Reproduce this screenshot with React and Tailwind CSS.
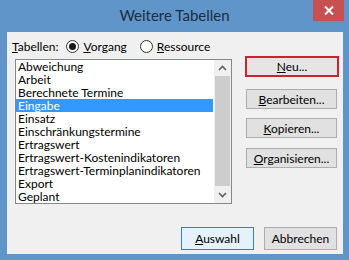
import React from "react";

const items = [
  "Abweichung",
  "Arbeit",
  "Berechnete Termine",
  "Eingabe",
  "Einsatz",
  "Einschränkungstermine",
  "Ertragswert",
  "Ertragswert-Kostenindikatoren",
  "Ertragswert-Terminplanindikatoren",
  "Export",
  "Geplant",
];

function Radio({ checked }) {
  return (
    <span className="w-[13px] h-[13px] rounded-full border border-[#333] bg-white flex items-center justify-center">
      {checked && <span className="w-[7px] h-[7px] rounded-full bg-[#1a1a1a]" />}
    </span>
  );
}

function Btn({ children, className = "" }) {
  return (
    <div
      className={
        "h-[20px] w-[91px] border border-[#adadad] bg-[#e1e1e1] flex items-center justify-center text-black " +
        className
      }
    >
      {children}
    </div>
  );
}

export default function App() {
  return (
    <div
      className="w-[349px] h-[260px] bg-[#5f95c9] flex flex-col overflow-hidden"
      style={{ fontFamily: 'Lato, "Noto Sans", sans-serif' }}
    >
      {/* Title bar */}
      <div className="relative h-[32px] flex items-center justify-center">
        <span className="text-[15px] text-[#1c2e40] mt-[-2px]">Weitere Tabellen</span>
        <div className="absolute right-[5px] top-0 w-[31px] h-[21px] bg-[#c75050] flex items-center justify-center">
          <svg width="10" height="9" viewBox="0 0 10 9">
            <path d="M1 0.5 L9 8.5 M9 0.5 L1 8.5" stroke="white" strokeWidth="2" />
          </svg>
        </div>
      </div>

      {/* Client area */}
      <div className="flex-1 ml-[7px] mr-[6px] mb-[6px] bg-[#f0f0f0] flex flex-col text-[12px] text-black leading-[13px]">
        <div className="flex items-center h-[16px] mt-[6px] pl-[5px]">
          <span>
            <span className="underline">T</span>abellen:
          </span>
          <span className="ml-[8px] flex items-center gap-[4px]">
            <Radio checked />
            <span>
              <span className="underline">V</span>organg
            </span>
          </span>
          <span className="ml-[13px] flex items-center gap-[4px]">
            <Radio />
            <span>
              <span className="underline">R</span>essource
            </span>
          </span>
        </div>

        <div className="flex mt-[2px]">
          {/* List box */}
          <div className="ml-[8px] mt-[3px] w-[217px] h-[145px] border border-[#828790] bg-white flex">
            <div className="flex-1 flex flex-col">
              {items.map((it) => (
                <div
                  key={it}
                  className={
                    "h-[13px] pl-[2px] flex items-center whitespace-nowrap " +
                    (it === "Eingabe" ? "bg-[#3399ff] text-white" : "")
                  }
                >
                  {it}
                </div>
              ))}
            </div>
            <div className="w-[17px] ml-[1px] bg-[#f0f0f0] flex flex-col items-center">
              <div className="h-[16px] flex items-center justify-center">
                <svg width="9" height="6" viewBox="0 0 9 6">
                  <path d="M1 5 L4.5 1.5 L8 5" stroke="#606060" strokeWidth="1.6" fill="none" />
                </svg>
              </div>
              <div className="w-[15px] h-[110px] bg-[#cdcdcd]" />
              <div className="flex-1" />
              <div className="h-[16px] flex items-center justify-center">
                <svg width="9" height="6" viewBox="0 0 9 6">
                  <path d="M1 1 L4.5 4.5 L8 1" stroke="#606060" strokeWidth="1.6" fill="none" />
                </svg>
              </div>
            </div>
          </div>

          {/* Side buttons */}
          <div className="ml-[13px] flex flex-col">
            <div className="w-[94px] h-[21px] border-2 border-[#d0222c] bg-[#e5e5e5] flex items-center justify-center">
              <span>
                <span className="underline">N</span>eu...
              </span>
            </div>
            <Btn className="mt-[12px] ml-[1px]">
              <span>
                <span className="underline">B</span>earbeiten...
              </span>
            </Btn>
            <Btn className="mt-[9px] ml-[1px]">
              <span>
                <span className="underline">K</span>opieren...
              </span>
            </Btn>
            <Btn className="mt-[10px] ml-[1px]">
              <span>
                <span className="underline">O</span>rganisieren...
              </span>
            </Btn>
          </div>
        </div>

        {/* Bottom buttons */}
        <div className="flex mt-[23px] pl-[174px]">
          <div className="w-[73px] h-[23px] border border-[#3c7fb1] bg-[#e5f1fb] flex items-center justify-center">
            <span>
              <span className="underline">A</span>uswahl
            </span>
          </div>
          <div className="ml-[10px] w-[73px] h-[23px] border border-[#adadad] bg-[#e1e1e1] flex items-center justify-center">
            Abbrechen
          </div>
        </div>
      </div>
    </div>
  );
}
